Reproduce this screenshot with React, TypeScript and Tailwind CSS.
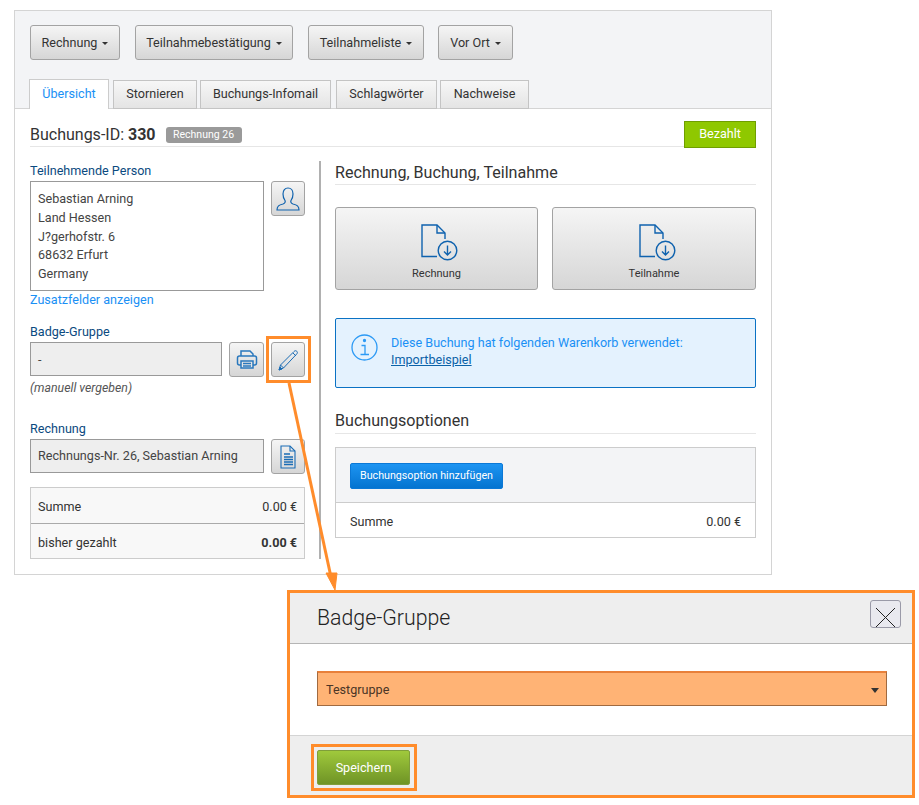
import React from "react";

const font = { fontFamily: "Roboto, 'Liberation Sans', sans-serif" };

const grayBtn =
  "flex items-center justify-center rounded-[3px] border border-[#a3a3a3] bg-gradient-to-b from-[#f5f5f5] to-[#d6d6d6] text-[#333]";

const DropButton = ({ label, width }: { label: string; width: string }) => (
  <button className={`${grayBtn} h-[35px] gap-[5px] pt-[1px] text-[12.6px] ${width}`}>
    {label}
    <span className="mt-[1px] h-0 w-0 border-x-[3px] border-t-[3px] border-x-transparent border-t-[#333]" />
  </button>
);

const DownloadDoc = () => (
  <svg className="ml-[6px] shrink-0" width="37" height="37" viewBox="0 0 37 37" fill="none" stroke="#0f62ae" strokeWidth="1.4">
    <path d="M16 32.500H1V1h15l8 8v6" />
    <path d="M16 1v8h8" />
    <circle cx="26.500" cy="26.500" r="9.300" />
    <path d="M26.500 21.500v9.500M23 27.500l3.500 3.500 3.500-3.500" />
  </svg>
);

const IconButton = ({ children, width = "w-[34px]" }: { children: React.ReactNode; width?: string }) => (
  <button className={`${grayBtn} h-[35px] shrink-0 ${width}`}>{children}</button>
);

const Tab = ({ label, width, active }: { label: string; width: string; active?: boolean }) => (
  <div
    className={
      active
        ? `flex h-[30px] items-center justify-center border border-b-0 border-[#ccc] bg-white pb-[1px] text-[12.6px] text-[#1a90f5] ${width}`
        : `flex h-[29px] items-center justify-center border border-[#c4c4c4] bg-gradient-to-b from-[#f7f7f7] to-[#e4e4e4] pb-[1px] text-[12.6px] text-[#333] ${width}`
    }
  >
    {label}
  </div>
);

export default function App() {
  return (
    <div className="relative h-[805px] w-[919px] overflow-hidden bg-white pl-[14px] pt-[10px] text-[#333]" style={font}>
      {/* main panel */}
      <div className="h-[565px] w-[758px] border border-[#d4d4d4]">
        <div className="h-[98px] border-b border-[#d4d4d4] bg-[#f3f4f6]">
          <div className="flex pl-[15px] pt-[14px]">
            <DropButton label="Rechnung" width="w-[90px] mr-[15px]" />
            <DropButton label="Teilnahmebestätigung" width="w-[158px] mr-[15px]" />
            <DropButton label="Teilnahmeliste" width="w-[116px] mr-[14px]" />
            <DropButton label="Vor Ort" width="w-[75px]" />
          </div>
          <div className="mt-[19px] flex items-end pl-[14px]">
            <Tab label="Übersicht" width="w-[80px] mr-[4px]" active />
            <Tab label="Stornieren" width="w-[84px] mr-[3px]" />
            <Tab label="Buchungs-Infomail" width="w-[131px] mr-[5px]" />
            <Tab label="Schlagwörter" width="w-[101px] mr-[3px]" />
            <Tab label="Nachweise" width="w-[89px]" />
          </div>
        </div>

        <div className="px-[15px]">
          {/* booking header */}
          <div className="flex h-[38px] items-start justify-between border-b border-[#e6e6e6] pt-[12px]">
            <div className="flex items-center">
              <span className="text-[16px] leading-[27px]">
                Buchungs-ID: <b className="font-bold">330</b>
              </span>
              <span className="ml-[10px] flex h-[16px] w-[76px] items-center justify-center rounded-[3px] bg-[#9a9a9a] text-[10.5px] text-white">
                Rechnung 26
              </span>
            </div>
            <div className="flex h-[27px] w-[72px] items-center justify-center border border-[#6f9e00] bg-[#8fc800] text-[12.6px] text-white">
              Bezahlt
            </div>
          </div>

          <div className="mt-[14px] flex">
            {/* left column */}
            <div className="h-[398px] w-[291px] border-r-2 border-[#b0b0b0] pr-[14px]">
              <div className="text-[12.6px] leading-[20px] text-[#0b4a80]">Teilnehmende Person</div>
              <div className="flex justify-between">
                <div className="h-[110px] w-[234px] border border-[#999] px-[7px] pt-[8px] text-[12.6px] leading-[18.75px] text-[#444]">
                  <div>Sebastian Arning</div>
                  <div>Land Hessen</div>
                  <div>J?gerhofstr. 6</div>
                  <div>68632 Erfurt</div>
                  <div>Germany</div>
                </div>
                <IconButton>
                  <svg width="24" height="24" viewBox="0 0 24 24" fill="none" stroke="#0f62ae" strokeWidth="1.2">
                    <path d="M1 23c0-4 2-5 6-6 2-.6 2.600-2 2-3.500C7.500 11.500 7 9.500 7 7c0-3.500 2-6 5-6s5 2.500 5 6c0 2.500-.5 4.500-2 6.500-.6 1.500 0 2.900 2 3.500 4 1 6 2 6 6z" />
                  </svg>
                </IconButton>
              </div>
              <div className="text-[12.6px] leading-[17px] text-[#1a90f5]">Zusatzfelder anzeigen</div>

              <div className="mt-[15px] text-[12.6px] leading-[18px] text-[#0b4a80]">Badge-Gruppe</div>
              <div className="mt-[1px] flex justify-between">
                <div className="flex h-[34px] w-[192px] items-center border border-[#999] bg-[#eee] px-[7px] pt-[2px] text-[12.6px] text-[#444]">
                  -
                </div>
                <div className="flex gap-[7px]">
                  <IconButton width="w-[35px]">
                    <svg width="22" height="22" viewBox="0 0 22 22" fill="none" stroke="#2a78bd" strokeWidth="1.5">
                      <path d="M5 7V2h9l3 3v2" />
                      <rect x="1.500" y="7" width="19" height="9" rx="2" />
                      <rect x="5" y="12" width="12" height="7" fill="#e6e6e6" />
                      <path d="M7 14.500h8M7 17h8" />
                    </svg>
                  </IconButton>
                  <IconButton>
                    <svg width="22" height="24" viewBox="0 0 22 24" fill="none" stroke="#1a6cb5" strokeWidth="1">
                      <path d="M2 22l1.500-5L17 3.500c1-1 2-1 2.800-.2s.8 1.800-.2 2.800L6.500 20z" />
                      <path d="M3.500 17l3 3M16 5l3 3" />
                      <path d="M2 22l1-3 2 2z" fill="#1a6cb5" />
                    </svg>
                  </IconButton>
                </div>
              </div>
              <div className="mt-[2px] text-[12.3px] italic leading-[18px] text-[#555]">(manuell vergeben)</div>

              <div className="mt-[23px] text-[12.6px] leading-[18px] text-[#0b4a80]">Rechnung</div>
              <div className="mt-[1px] flex justify-between">
                <div className="flex h-[34px] w-[234px] items-center border border-[#999] bg-[#eee] px-[7px] text-[12.6px] text-[#444]">
                  Rechnungs-Nr. 26, Sebastian Arning
                </div>
                <IconButton>
                  <svg width="18" height="24" viewBox="0 0 18 24" fill="none" stroke="#1a6cb5" strokeWidth="1.1">
                    <path d="M2 1h9l5 5v17H2z" />
                    <path d="M11 1v5h5" />
                    <path d="M5 9h6M5 12h9M5 14.500h9M5 17h9M5 19.500h9" strokeWidth="1.300" />
                  </svg>
                </IconButton>
              </div>
              <div className="mt-[13px] border border-[#ccc] bg-[#f8f8f8] text-[12.6px]">
                <div className="flex h-[36px] items-center justify-between border-b border-[#aaa] px-[7px] pt-[3px]">
                  <span>Summe</span>
                  <span>0.00 €</span>
                </div>
                <div className="flex h-[34px] items-center justify-between px-[7px] pt-[5px]">
                  <span>bisher gezahlt</span>
                  <b>0.00 €</b>
                </div>
              </div>
            </div>

            {/* right column */}
            <div className="ml-[14px] w-[421px]">
              <div className="h-[24px] border-b border-[#e6e6e6] pt-[1px] text-[16.1px] leading-[22px]">Rechnung, Buchung, Teilnahme</div>
              <div className="mt-[22px] flex justify-between">
                <button className={`${grayBtn} h-[83px] w-[203px] flex-col justify-start pt-[16px] text-[11px] leading-[14px]`}>
                  <DownloadDoc />
                  <span className="mt-[6px]">Rechnung</span>
                </button>
                <button className={`${grayBtn} h-[83px] w-[204px] flex-col justify-start pt-[16px] text-[11px] leading-[14px]`}>
                  <DownloadDoc />
                  <span className="mt-[6px]">Teilnahme</span>
                </button>
              </div>
              <div className="mt-[28px] flex h-[70px] rounded-[2px] border border-[#0a72c4] bg-[#e4f2fe] pl-[15px] pt-[15px]">
                <svg width="27" height="27" viewBox="0 0 27 27" fill="none" stroke="#2c9af5" strokeWidth="1.3">
                  <circle cx="13.500" cy="13.500" r="12.500" />
                  <path d="M10.500 11.500h3.500v9M9.500 20.500h8.500" />
                  <circle cx="13.500" cy="6.500" r="1" fill="#2c9af5" />
                </svg>
                <div className="ml-[13px] text-[12.6px] leading-[17px] text-[#1a90f5]">
                  <div>Diese Buchung hat folgenden Warenkorb verwendet:</div>
                  <div className="text-[#0b62a8] underline">Importbeispiel</div>
                </div>
              </div>
              <div className="mt-[22px] h-[24px] border-b border-[#e6e6e6] text-[16.1px] leading-[22px]">Buchungsoptionen</div>
              <div className="mt-[13px] border border-[#ccc]">
                <div className="h-[55px] border-b border-[#ccc] bg-[#f3f4f6] pl-[14px] pt-[14px]">
                  <button className="h-[26px] w-[153px] rounded-[2px] border border-[#0b78d6] bg-gradient-to-b from-[#1c94f2] to-[#0474d0] text-[10.7px] text-white">
                    Buchungsoption hinzufügen
                  </button>
                </div>
                <div className="flex h-[34px] items-center justify-between px-[14px] pt-[5px] text-[12.6px]">
                  <span>Summe</span>
                  <span>0.00 €</span>
                </div>
              </div>
            </div>
          </div>
        </div>
      </div>

      {/* dialog */}
      <div className="ml-[273px] mt-[15px] h-[208px] w-[628px] border-[3px] border-[#ff8c2b]">
        <div className="flex h-[51px] items-start justify-between border-b border-[#b5b5b5] bg-[#eee] pl-[27px] pr-[11px]">
          <span className="mt-[11px] text-[21.300px] font-light leading-[28px] text-[#222]">Badge-Gruppe</span>
          <div className="mt-[7px] h-[28px] w-[31px] overflow-hidden rounded-[3px] border border-[#9a9aa8] bg-[#e9e9ef]">
            <svg width="29" height="26" viewBox="0 0 29 26" fill="none" stroke="#222" strokeWidth="1">
              <path d="M5 7l20 20M24 7 4 27" />
            </svg>
          </div>
        </div>
        <div className="h-[92px] border-b border-[#d4d4d4] bg-white pl-[27px] pt-[27px]">
          <div className="flex h-[35px] w-[570px] items-center justify-between border border-t-2 border-[#a06a40] border-t-[#e8803a] bg-[#ffb375] pl-[8px] pr-[7px] pt-[3px] text-[12.6px] text-[#4a3526]">
            Testgruppe
            <span className="h-0 w-0 border-x-[4px] border-t-[5px] border-x-transparent border-t-[#333]" />
          </div>
        </div>
        <div className="h-[59px] bg-[#eee] pl-[27px] pt-[14px]">
          <button className="h-[35px] w-[93px] rounded-[2px] border border-[#7f9e3a] bg-gradient-to-b from-[#a0c93c] to-[#6f9426] pt-[1px] text-[12.6px] text-white">
            Speichern
          </button>
        </div>
      </div>

      {/* callouts over the page */}
      <div className="absolute left-[266px] top-[336px] h-[47px] w-[45px] border-[3px] border-[#ff8c2b]" />
      <div className="absolute left-[311px] top-[744px] h-[47px] w-[106px] border-[3px] border-[#ff8c2b]" />
      <svg className="absolute left-0 top-0" width="919" height="805" fill="none">
        <path d="M289 383 331 577" stroke="#ff8c2b" strokeWidth="3" />
        <path d="M326 573 337 573 335 590z" fill="#ff8c2b" stroke="#ff8c2b" />
      </svg>
    </div>
  );
}
